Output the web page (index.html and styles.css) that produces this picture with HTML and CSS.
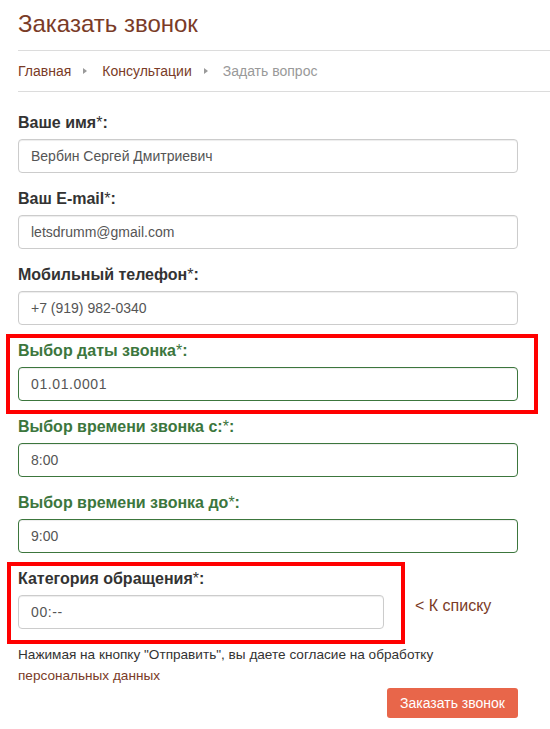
FILE: index.html
```html
<!DOCTYPE html>
<html lang="ru">
<head>
<meta charset="utf-8">
<title>Заказать звонок</title>
<link rel="stylesheet" href="styles.css">
</head>
<body>
<div class="page">
  <h1 class="title">Заказать звонок</h1>
  <hr class="rule">
  <nav class="crumbs">
    <a class="crumb" href="#">Главная</a>
    <svg class="sep" width="4" height="6" viewBox="0 0 4 6"><path d="M0 0L4 3L0 6Z" fill="#9a9a9a"/></svg>
    <a class="crumb" href="#">Консультации</a>
    <svg class="sep" width="4" height="6" viewBox="0 0 4 6"><path d="M0 0L4 3L0 6Z" fill="#9a9a9a"/></svg>
    <span class="crumb-current">Задать вопрос</span>
  </nav>
  <hr class="rule">

  <form class="form">
    <div class="group">
      <label class="label">Ваше имя<span class="req">*</span>:</label>
      <input class="field" type="text" value="Вербин Сергей Дмитриевич">
    </div>
    <div class="group">
      <label class="label">Ваш E-mail<span class="req">*</span>:</label>
      <input class="field" type="text" value="letsdrumm@gmail.com">
    </div>
    <div class="group">
      <label class="label">Мобильный телефон<span class="req">*</span>:</label>
      <input class="field" type="text" value="+7 (919) 982-0340">
    </div>
    <div class="group ok">
      <span class="mark mark-date"></span>
      <label class="label">Выбор даты звонка<span class="req">*</span>:</label>
      <input class="field spaced" type="text" value="01.01.0001">
    </div>
    <div class="group ok">
      <label class="label">Выбор времени звонка с:<span class="req">*</span>:</label>
      <input class="field" type="text" value="8:00">
    </div>
    <div class="group ok">
      <label class="label">Выбор времени звонка до<span class="req">*</span>:</label>
      <input class="field" type="text" value="9:00">
    </div>
    <div class="row">
      <div class="group cat">
        <span class="mark mark-cat"></span>
        <label class="label">Категория обращения<span class="req">*</span>:</label>
        <input class="field spaced" type="text" value="00:--">
      </div>
      <a class="back" href="#">&lt; К списку</a>
    </div>
    <p class="note">Нажимая на кнопку "Отправить", вы даете согласие на обработку <a class="note-link" href="#">персональных данных</a></p>
    <div class="actions">
      <button class="btn" type="button">Заказать звонок</button>
    </div>
  </form>
</div>
</body>
</html>
```

FILE: styles.css
```css
* { box-sizing: border-box; }
html, body { margin: 0; padding: 0; background: #fff; }
body {
  font-family: "Liberation Sans", Arial, sans-serif;
  font-size: 14px;
  color: #333;
  overflow: hidden;
}
.page {
  padding-left: 18px;
}
.title {
  margin: 0;
  padding-top: 11px;
  font-size: 24px;
  line-height: 26px;
  font-weight: normal;
  color: #7a3b27;
  height: 50px;
}
.rule {
  margin: 0;
  border: 0;
  border-top: 1px solid #dcdcdc;
  height: 0;
}
.crumbs {
  display: flex;
  align-items: center;
  height: 40px;
  padding-bottom: 1px;
  font-size: 14px;
  line-height: 20px;
}
.crumb { color: #7a3b27; text-decoration: none; }
.crumb-current { color: #999; }
.sep { margin: 0 15px 0 12px; }
.form {
  width: 500px;
  padding-top: 20px;
}
.group {
  position: relative;
  margin-bottom: 15px;
}
.label {
  display: block;
  font-size: 16px;
  line-height: 22px;
  font-weight: bold;
  margin-bottom: 5px;
  color: #333;
}
.req { font-weight: normal; }
.field {
  display: block;
  width: 100%;
  height: 34px;
  padding: 6px 12px;
  font-family: "Liberation Sans", Arial, sans-serif;
  font-size: 14px;
  line-height: 20px;
  color: #555;
  background: #fff;
  border: 1px solid #ccc;
  border-radius: 4px;
  box-shadow: inset 0 1px 1px rgba(0,0,0,.075);
  outline: none;
}
.spaced { letter-spacing: 0.6px; }
.ok .label { color: #3c763d; }
.ok .field { border-color: #3c763d; }
.row {
  display: flex;
}
.cat { width: 366px; }
.back {
  align-self: flex-end;
  margin: 0 0 27px 31px;
  font-size: 16px;
  line-height: 22px;
  color: #7a3b27;
  text-decoration: none;
}
.mark {
  position: absolute;
  border: 4px solid #ff0000;
  pointer-events: none;
}
.mark-date { left: -12px; top: -6px; width: 532px; height: 80px; }
.mark-cat { left: -11px; top: -6px; width: 398px; height: 82px; }
.note {
  margin: 0;
  font-size: 13.6px;
  line-height: 21px;
  color: #333;
  width: 450px;
}
.note-link { color: #7a3b27; text-decoration: none; }
.actions {
  display: flex;
  justify-content: flex-end;
  padding-top: 2px;
}
.btn {
  height: 30px;
  padding: 5px 13px;
  font-family: "Liberation Sans", Arial, sans-serif;
  font-size: 14px;
  line-height: 20px;
  color: #fff;
  background: #e8664a;
  border: 0;
  border-radius: 3px;
}
```
